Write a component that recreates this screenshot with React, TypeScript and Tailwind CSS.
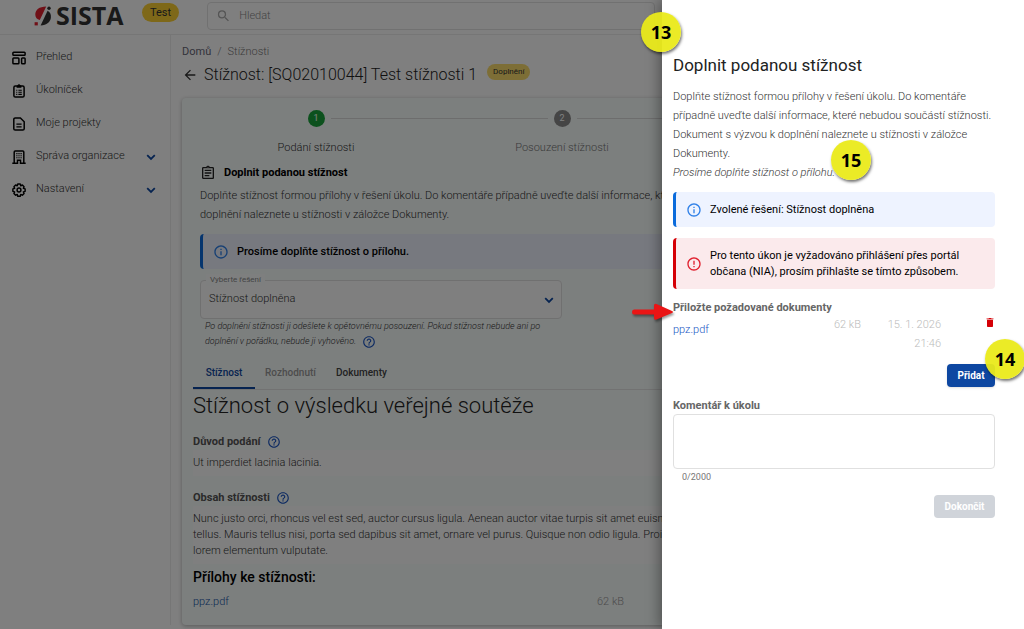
import React from "react";
import {
  MdArrowBack,
  MdErrorOutline,
  MdHelpOutline,
  MdInfoOutline,
  MdOutlineAssignment,
  MdSearch,
} from "react-icons/md";

function OverviewIcon() {
  return (
    <svg viewBox="0 0 14 14" className="size-3.5" fill="none" stroke="currentColor" strokeWidth="1.5">
      <rect x="0.9" y="1.2" width="12.2" height="3" rx="0.8" />
      <rect x="0.9" y="7" width="6" height="5.8" rx="0.8" />
      <rect x="9.6" y="7" width="3.5" height="5.8" rx="0.8" />
    </svg>
  );
}

function TasksIcon() {
  return (
    <svg viewBox="0 0 14 14" className="size-3.5" fill="none" stroke="currentColor" strokeWidth="1.5">
      <rect x="1.9" y="2.1" width="10.2" height="11" rx="1.4" />
      <path d="M4.6 3.7V2.2Q4.6 1.4 5.4 1.4Q6 0.2 7 0.2T8.6 1.4Q9.4 1.4 9.4 2.2V3.7z" fill="currentColor" stroke="none" />
      <path d="M4.2 6.2h1.1M6.4 6.2h3.4M4.2 8.3h1.1M6.4 8.3h3.4M4.2 10.4h1.1M6.4 10.4h3.4" strokeWidth="1.1" />
    </svg>
  );
}

function ProjectsIcon() {
  return (
    <svg viewBox="0 0 14 14" className="size-3.5" fill="none" stroke="currentColor" strokeWidth="1.5">
      <path d="M3.2 0.9h5.2l3.8 3.8v7a1.4 1.4 0 0 1-1.4 1.4H3.2a1.4 1.4 0 0 1-1.4-1.4V2.3A1.4 1.4 0 0 1 3.2 0.9z" />
      <path d="M4.4 7.2h5.2M4.4 9.8h5.2" strokeWidth="1.3" />
    </svg>
  );
}

function BuildingIcon() {
  return (
    <svg viewBox="0 0 14 14" className="size-3.5" fill="none" stroke="currentColor" strokeWidth="1.5">
      <path d="M2.2 13V1.9Q2.2 0.9 3.2 0.9h7.6q1 0 1 1V13" />
      <path d="M0.3 13.2h5.2V10.2h3v3h5.2" />
      <path d="M4.3 3.6h1.2M6.4 3.6h1.2M8.5 3.6h1.2M4.3 5.7h1.2M6.4 5.7h1.2M8.5 5.7h1.2M4.3 7.8h1.2M6.4 7.8h1.2M8.5 7.8h1.2" strokeWidth="1.1" />
    </svg>
  );
}

function SettingsIcon() {
  return (
    <svg viewBox="0 0 24 24" className="size-3.5 overflow-visible" fill="none" stroke="currentColor" strokeWidth="2.5" strokeLinejoin="round">
      <path d="M9.9 1.7h4.2l.9 3 2.8-1.2 2.9 2.9-1.2 2.8 3 .9v4.2l-3 .9 1.2 2.8-2.9 2.9-2.8-1.2-.9 3H9.9l-.9-3-2.8 1.2-2.9-2.9 1.2-2.8-3-.9v-4.2l3-.9-1.2-2.8 2.9-2.9L9 4.7z" />
      <circle cx="12" cy="12" r="3.3" />
    </svg>
  );
}

function ChevronIcon() {
  return (
    <svg viewBox="0 0 16 16" className="size-4" fill="none" stroke="currentColor" strokeWidth="1.8">
      <path d="M4.2 6.2L8 10l3.8-3.8" />
    </svg>
  );
}

function TrashIcon() {
  return (
    <svg viewBox="0 0 10 12" className="h-3 w-2.5" fill="currentColor">
      <path d="M1.5 2.2V1.5h2L4 1h2l.5.5h2v.7z" />
      <path d="M2 2.8h6v6.4q0 .8-.8.8H2.8q-.8 0-.8-.8z" />
    </svg>
  );
}

function LogoMark() {
  return (
    <svg viewBox="0 0 18 20" className="h-5 w-4.5">
      <path d="M1.3 8.8C1.2 4 5.2 0.7 12.2 0.6L5.8 14C3 13.400 1.300 11.500 1.300 8.800z" fill="#e0202e" />
      <rect x="0.6" y="16.2" width="3.2" height="3.2" fill="#e0202e" />
      <circle cx="15" cy="2.300" r="1.700" fill="#333" />
      <path d="M13.600 4.700C16.200 6.200 17.200 8.600 16.900 11.500C16.400 16 12.800 19.300 6.600 19.500z" fill="#333" />
    </svg>
  );
}

const NAV = [
  { label: "Přehled", icon: <OverviewIcon />, open: false },
  { label: "Úkolníček", icon: <TasksIcon />, open: false },
  { label: "Moje projekty", icon: <ProjectsIcon />, open: false },
  { label: "Správa organizace", icon: <BuildingIcon />, open: true },
  { label: "Nastavení", icon: <SettingsIcon />, open: true },
];

function Alert({ tone, children }: { tone: "info" | "error"; children: React.ReactNode }) {
  const info = tone === "info";
  return (
    <div
      className={
        info
          ? "flex items-center gap-2 rounded-sm border-l-3 border-[#0a6bdc] bg-[#eef3ff] pt-2.5 pr-3 pb-[9px] pl-2.5"
          : "flex items-center gap-2 rounded-sm border-l-3 border-[#d50006] bg-[#fbeaec] pt-2.5 pr-3 pb-[9px] pl-2.5"
      }
    >
      {info ? (
        <MdInfoOutline className="size-4 shrink-0 text-[#2f80e8]" />
      ) : (
        <MdErrorOutline className="size-4 shrink-0 text-[#e0202e]" />
      )}
      <p className="text-[11px] leading-4 text-black">{children}</p>
    </div>
  );
}

function Marker({ n, className }: { n: number; className: string }) {
  return (
    <span
      className={
        "absolute flex size-10 items-center justify-center rounded-full bg-[#eaea1a]/95 font-['Open_Sans',sans-serif] text-lg font-bold text-black shadow-[1px_2px_3px_rgba(0,0,0,0.55)] " +
        className
      }
    >
      {n}
    </span>
  );
}

function Header() {
  return (
    <header className="flex h-[35px] border-b border-[#ececec] bg-white">
      <div className="flex w-[207px] shrink-0 items-start pl-[34px]">
        <a href="#" className="flex w-[108px] items-center gap-1 text-[#333]">
          <LogoMark />
          <span className="font-['Open_Sans',sans-serif] text-[25px] leading-[31px] font-bold">SISTA</span>
        </a>
        <span className="mt-[3px] rounded-full bg-[#fdd033] px-2 text-[11px] leading-[19px] text-[#333]">
          Test
        </span>
      </div>
      <label className="mt-0.5 flex h-7 w-[448px] items-center gap-2 rounded border border-[#e2e2e2] px-2">
        <MdSearch className="size-4 text-[#aaa]" />
        <input
          type="search"
          aria-label="Hledat"
          placeholder="Hledat"
          className="w-full bg-transparent text-[11px] font-light outline-none placeholder:text-[#888]"
        />
      </label>
    </header>
  );
}

function Sidebar() {
  return (
    <nav className="w-[171px] shrink-0 border-r border-[#ececec] pt-1.5">
      <ul>
        {NAV.map((item) => (
          <li key={item.label}>
            <a href="#" className="flex h-[33px] items-center pr-[11px] pl-3 text-[11px] font-light text-[#333]">
              <span className="flex w-6 justify-start text-black">{item.icon}</span>
              <span className="flex-1">{item.label}</span>
              {item.open && (
                <span className="text-[#0d47a1]">
                  <ChevronIcon />
                </span>
              )}
            </a>
          </li>
        ))}
      </ul>
    </nav>
  );
}

const STEPS = ["Podání stížnosti", "Posouzení stížnosti"];

function Stepper() {
  return (
    <ol className="flex pt-3">
      {STEPS.map((label, i) => (
        <li key={label} className="w-1/3 text-center">
          <div className="flex items-center gap-1.5">
            <span className={i === 0 ? "h-px flex-1" : "h-px flex-1 bg-[#dadada]"} />
            <span
              className={
                i === 0
                  ? "size-[17px] rounded-full bg-[#18a33a] text-[9px] leading-[17px] text-white"
                  : "size-[17px] rounded-full bg-[#8a8a8a] text-[9px] leading-[17px] text-white"
              }
            >
              {i + 1}
            </span>
            <span className="h-px flex-1 bg-[#dadada]" />
          </div>
          <div
            className={
              i === 0
                ? "mt-[13px] text-[11px] leading-4 font-light text-[#333]"
                : "mt-[13px] text-[11px] leading-4 font-light text-[#777]"
            }
          >
            {label}
          </div>
        </li>
      ))}
    </ol>
  );
}

function Field({ label, children }: { label: string; children: React.ReactNode }) {
  return (
    <section>
      <h3 className="flex h-4 items-center gap-1.5 text-[11px] font-bold text-[#555]">
        {label}
        <MdHelpOutline className="size-3.5 text-[#1a56c4]" />
      </h3>
      <div className="bg-white py-[5px] text-[11px] leading-4 font-light text-[#333]">{children}</div>
    </section>
  );
}

function Content() {
  return (
    <main className="min-w-0 flex-1 pr-[82px] pl-[11px]">
      <div className="pt-[9px] text-[11px] leading-4 font-light text-[#777]">
        <a href="#" className="font-normal text-[#667]">Domů</a>
        <span className="mx-1.5">/</span>
        <span>Stížnosti</span>
      </div>
      <div className="mt-[3px] flex h-6 items-center">
        <button type="button" aria-label="Zpět" className="mr-1.5 text-[#333]">
          <MdArrowBack className="size-4" />
        </button>
        <h1 className="text-base font-light text-[#222]">Stížnost: [SQ02010044] Test stížnosti 1</h1>
        <span className="mb-1.5 ml-2.5 rounded-full bg-[#fbdc6c] px-1.5 text-[8px] leading-4 text-[#333]">Doplnění</span>
      </div>

      <div className="mt-[11px] rounded-sm bg-[#f9fefd] px-[11px] pb-[15px] shadow-[0_1px_4px_rgba(0,0,0,0.3)]">
        <Stepper />

        <section className="px-[7px]">
          <h2 className="mt-[9px] flex h-4 items-center gap-2 text-[11px] font-bold text-black">
            <MdOutlineAssignment className="size-4 text-[#222]" />
            Doplnit podanou stížnost
          </h2>
          <p className="mt-[5px] text-[11px] leading-[19px] font-light text-[#333]">
            Doplňte stížnost formou přílohy v řešení úkolu. Do komentáře případně uveďte další informace, které nebudou
            součástí stížnosti. Dokument s výzvou k doplnění naleznete u stížnosti v záložce Dokumenty.
          </p>
          <div className="mt-[10px]">
            <Alert tone="info">
              <span className="font-medium">Prosíme doplňte stížnost o přílohu.</span>
            </Alert>
          </div>
          <div className="relative mt-[11px] w-1/2">
            <label htmlFor="reseni" className="absolute -top-1.5 left-1.5 bg-[#fcfefe] px-1 text-[8px] leading-3 text-[#888]">
              Vyberte řešení
            </label>
            <select
              id="reseni"
              className="block h-[39px] w-full appearance-none rounded border border-[#e0e0e0] bg-white px-2 text-[11px] font-light text-[#333]"
            >
              <option>Stížnost doplněna</option>
            </select>
            <span className="pointer-events-none absolute top-3 right-[5px] text-[#0d47a1]">
              <ChevronIcon />
            </span>
          </div>
          <p className="w-1/2 pr-4 pl-[5px] text-[9px] leading-[15px] font-light text-[#333] italic">
            Po doplnění stížnosti ji odešlete k opětovnému posouzení. Pokud stížnost nebude ani po doplnění v pořádku,
            nebude ji vyhověno.
            <MdHelpOutline className="ml-1.5 inline size-3.5 align-middle text-[#1a56c4]" />
          </p>
        </section>

        <div role="tablist" className="mt-[7px] flex h-[34px] border-b border-[#e4e4e4] text-[10px] font-medium">
          <button type="button" role="tab" aria-selected="true" className="w-[62px] border-b-2 border-[#0d47a1] pt-0.5 text-[#0d47a1]">
            Stížnost
          </button>
          <button type="button" role="tab" aria-selected="false" disabled className="w-[71px] text-[#999]">
            Rozhodnutí
          </button>
          <button type="button" role="tab" aria-selected="false" className="w-[71px] text-[#444]">
            Dokumenty
          </button>
        </div>

        <h2 className="text-[22px] leading-8 font-light text-[#222]">Stížnost o výsledku veřejné soutěže</h2>
        <div className="mt-3 flex flex-col gap-3.5">
          <Field label="Důvod podání">Ut imperdiet lacinia lacinia.</Field>
          <Field label="Obsah stížnosti">
            Nunc justo orci, rhoncus vel est sed, auctor cursus ligula. Aenean auctor vitae turpis sit amet euismod
            <br />
            tellus. Mauris tellus nisi, porta sed dapibus sit amet, ornare vel purus. Quisque non odio ligula. Proin
            <br />
            lorem elementum vulputate.
          </Field>
        </div>
        <h3 className="mt-[3px] text-sm leading-5 font-medium text-black">Přílohy ke stížnosti:</h3>
        <div className="mt-[7px] flex h-4 items-center text-[11px] font-light">
          <a href="#" className="w-[404px] text-[#1a56a8]">ppz.pdf</a>
          <span className="text-[#999]">62 kB</span>
        </div>
      </div>
    </main>
  );
}

function Drawer() {
  return (
    <aside className="absolute inset-y-0 right-0 w-[362px] bg-white pt-[54px] pr-[29px] pl-[11px] shadow-[-3px_0_12px_rgba(0,0,0,0.35)]">
      <h2 className="text-[17px] leading-[22px] text-[#222]">Doplnit podanou stížnost</h2>
      <p className="mt-[11px] text-[11px] leading-[19px] font-light text-[#333]">
        Doplňte stížnost formou přílohy v řešení úkolu. Do komentáře případně uveďte další informace, které nebudou
        součástí stížnosti. Dokument s výzvou k doplnění naleznete u stížnosti v záložce Dokumenty.
        <br />
        <em>Prosíme doplňte stížnost o přílohu.</em>
      </p>
      <div className="mt-[10px] flex flex-col gap-[11px]">
        <Alert tone="info">Zvolené řešení: Stížnost doplněna</Alert>
        <Alert tone="error">
          Pro tento úkon je vyžadováno přihlášení přes portál občana (NIA), prosím přihlašte se tímto způsobem.
        </Alert>
      </div>

      <h3 className="mt-[11px] text-[11px] leading-[15px] font-bold text-[#666]">Přiložte požadované dokumenty</h3>
      <div className="flex text-[11px] leading-[19px] font-light">
        <a href="#" className="mt-[5px] flex-1 text-[#1a56c4]">ppz.pdf</a>
        <span className="text-[#bbb]">62 kB</span>
        <span className="w-20 text-right text-[#bbb]">15. 1. 2026 21:46</span>
        <button type="button" aria-label="Smazat" className="mt-0.5 ml-11 h-3 text-[#d50006]">
          <TrashIcon />
        </button>
      </div>
      <div className="mt-[11px] flex justify-end">
        <button type="button" className="h-[23px] w-12 rounded-sm bg-[#0d47a1] text-[10px] font-bold text-white shadow-sm">
          Přidat
        </button>
      </div>

      <label htmlFor="komentar" className="mt-[11px] block text-[11px] leading-4 font-bold text-[#666]">
        Komentář k úkolu
      </label>
      <textarea
        id="komentar"
        className="block h-[55px] w-full resize-none rounded border border-[#e0e0e0] bg-white p-2 text-[11px] outline-none"
      />
      <div className="mt-0.5 pl-[9px] text-[9px] leading-3 text-[#777]">0/2000</div>
      <div className="mt-3 flex justify-end">
        <button type="button" disabled className="h-[23px] w-[61px] rounded-sm bg-[#d0d4da] text-[10px] font-bold text-white">
          Dokončit
        </button>
      </div>

      <Marker n={13} className="top-3 -left-[21px]" />
      <Marker n={15} className="top-[140px] left-[169px]" />
      <Marker n={14} className="top-[339px] left-[323px]" />
      <svg viewBox="0 0 44 20" className="absolute top-[302px] -left-[31px] h-5 w-11 drop-shadow-[1px_2px_1px_rgba(0,0,0,0.4)]">
        <path d="M3 7.500h20V3.500q0-2.500 2.500-1.500L41 9q2 1 0 2L25.500 17.500q-2.500 1-2.500-1.500V12.500H3q-2 0-2-2.500t2-2.500z" fill="#ea1515" />
      </svg>
    </aside>
  );
}

export default function App() {
  return (
    <div className="relative min-h-screen overflow-hidden bg-white font-[Roboto,sans-serif]">
      <Header />
      <div className="flex">
        <Sidebar />
        <Content />
      </div>
      <div className="absolute inset-0 bg-black/50" />
      <Drawer />
    </div>
  );
}
